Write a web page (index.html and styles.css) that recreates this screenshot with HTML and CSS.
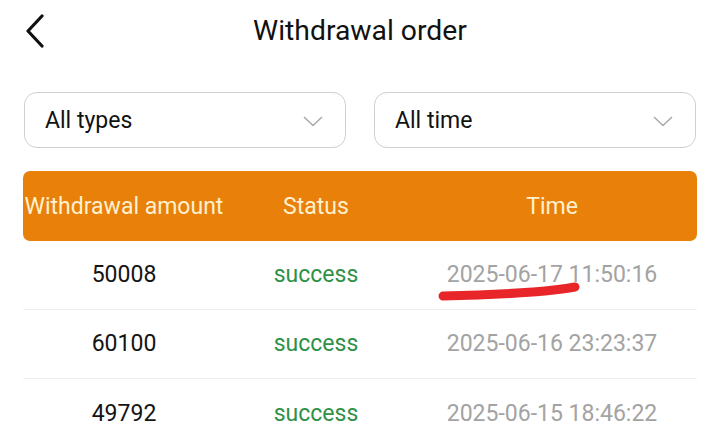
FILE: index.html
```html
<!DOCTYPE html>
<html lang="en">
<head>
<meta charset="utf-8">
<title>Withdrawal order</title>
<link rel="stylesheet" href="styles.css">
</head>
<body>
<div class="page">
  <header class="topbar">
    <span class="back">
      <svg width="20" height="34" viewBox="0 0 20 34"><path d="M17 2 L3 17 L17 32" fill="none" stroke="#111" stroke-width="3.2" stroke-linecap="round" stroke-linejoin="round"/></svg>
    </span>
    <h1 class="title">Withdrawal order</h1>
  </header>

  <div class="filters">
    <div class="select">
      <span>All types</span>
      <svg class="chev" width="20" height="11" viewBox="0 0 20 11"><path d="M1 1 L10 9.5 L19 1" fill="none" stroke="#a8a8a8" stroke-width="1.5"/></svg>
    </div>
    <div class="select">
      <span>All time</span>
      <svg class="chev" width="20" height="11" viewBox="0 0 20 11"><path d="M1 1 L10 9.5 L19 1" fill="none" stroke="#a8a8a8" stroke-width="1.5"/></svg>
    </div>
  </div>

  <div class="table">
    <div class="thead">
      <div>Withdrawal amount</div>
      <div>Status</div>
      <div>Time</div>
    </div>
    <div class="row">
      <div class="amt">50008</div>
      <div class="ok">success</div>
      <div class="time">2025-06-17 11:50:16</div>
      <svg class="mark" width="674" height="69" viewBox="0 0 674 69"><path d="M420 55 Q470 54 510 51 Q535 49 552 46" fill="none" stroke="#e8262a" stroke-width="9" stroke-linecap="round"/></svg>
    </div>
    <div class="row">
      <div class="amt">60100</div>
      <div class="ok">success</div>
      <div class="time">2025-06-16 23:23:37</div>
    </div>
    <div class="row last">
      <div class="amt">49792</div>
      <div class="ok">success</div>
      <div class="time">2025-06-15 18:46:22</div>
    </div>
  </div>
</div>
</body>
</html>
```

FILE: styles.css
```css
* { box-sizing: border-box; }
html, body { margin: 0; padding: 0; background: #fff; }
body {
  font-family: Roboto, "Liberation Sans", Arial, sans-serif;
  color: #111;
  width: 720px;
  height: 445px;
  overflow: hidden;
}
.topbar {
  position: relative;
  height: 62px;
  display: flex;
  align-items: center;
  justify-content: center;
}
.back {
  position: absolute;
  left: 25px;
  top: 14px;
  display: flex;
}
.title {
  margin: 0;
  font-size: 28.3px;
  font-weight: 400;
  color: #111;
  line-height: 1;
}
.filters {
  display: flex;
  gap: 28px;
  padding: 30px 24px 0;
}
.select {
  flex: 1;
  height: 56px;
  border: 1.6px solid #cfcfcf;
  border-radius: 13px;
  display: flex;
  align-items: center;
  justify-content: space-between;
  padding: 0 22px 0 20px;
  font-size: 23px;
  color: #111;
}
.chev { margin-top: 2px; }
.table {
  margin: 23px 23px 0;
}
.thead {
  display: grid;
  grid-template-columns: 202px 182px 1fr;
  height: 70px;
  align-items: center;
  background: #e8800a;
  border-radius: 7px;
  color: #fff1cf;
  font-size: 23px;
  text-align: center;
}
.row {
  position: relative;
  display: grid;
  grid-template-columns: 202px 182px 1fr;
  height: 69px;
  align-items: center;
  text-align: center;
  font-size: 23px;
  border-bottom: 1.5px solid #f0f0f0;
  padding-bottom: 1px;
}
.row.last { border-bottom: none; }
.amt { color: #141414; }
.ok { color: #2f9148; }
.time { color: #a3a3a3; }
.mark {
  position: absolute;
  left: 0;
  top: 0;
  pointer-events: none;
}
```
